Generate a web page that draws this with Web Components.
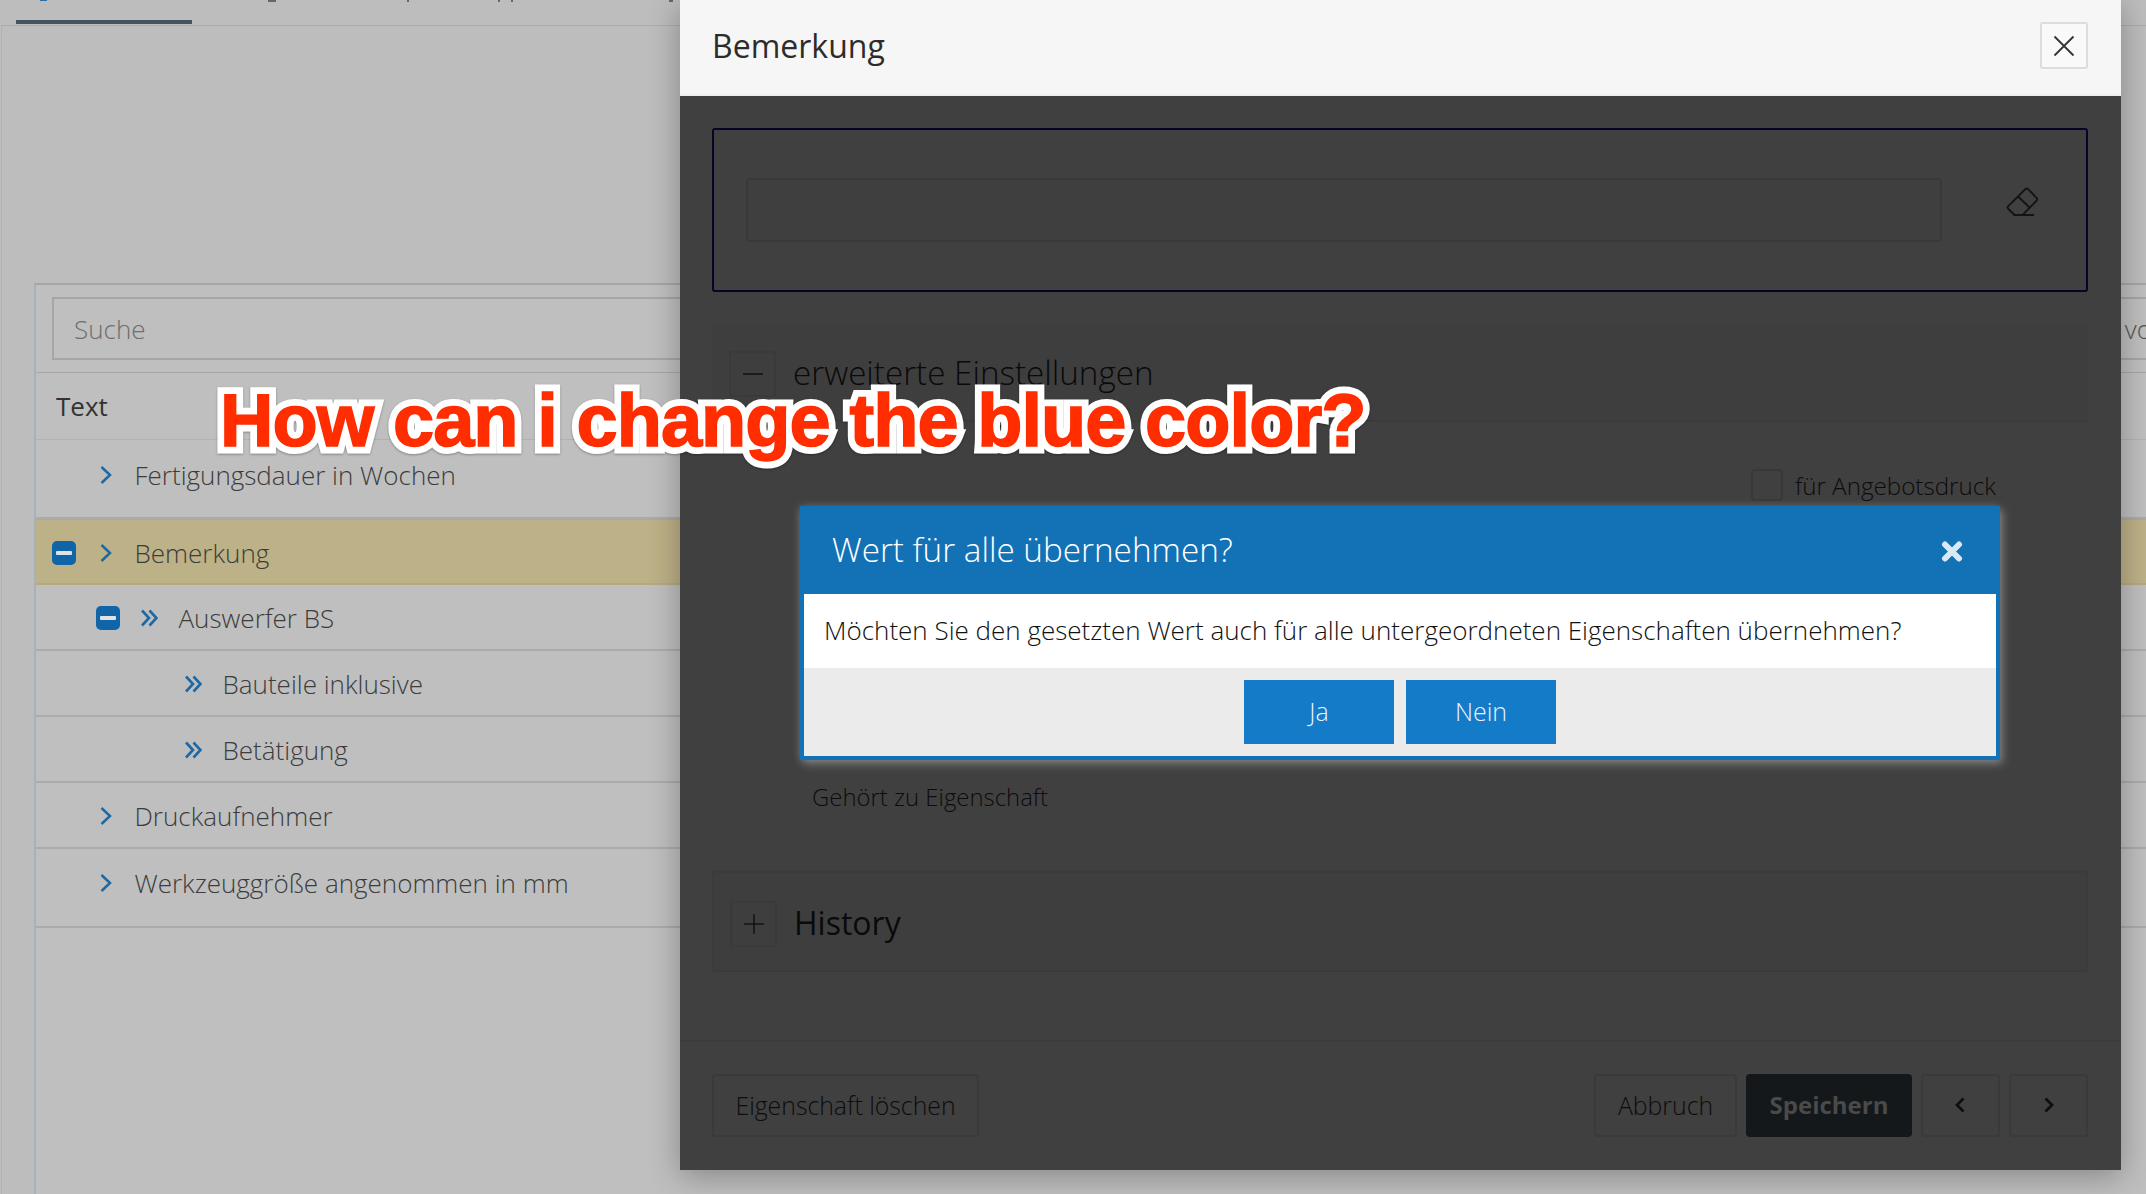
<!DOCTYPE html>
<html lang="de">
<head>
<meta charset="utf-8">
<title>Bemerkung</title>
<style>
html, body { margin: 0; height: 100%; }
</style>
</head>
<body>
<app-page>
  <tab-strip></tab-strip>
  <tree-card>
    <tree-row level="0" style="--extra:13px">Fertigungsdauer in Wochen</tree-row>
    <tree-row level="0" check active>Bemerkung</tree-row>
    <tree-row level="1" check double>Auswerfer BS</tree-row>
    <tree-row level="2" double>Bauteile inklusive</tree-row>
    <tree-row level="2" double>Betätigung</tree-row>
    <tree-row level="0">Druckaufnehmer</tree-row>
    <tree-row level="0" style="--extra:13px;--pad:12px">Werkzeuggröße angenommen in mm</tree-row>
  </tree-card>

  <edit-modal>
    <span slot="title">Bemerkung</span>
    <value-box></value-box>
    <modal-section mode="minus" style="margin-top:31px">erweiterte Einstellungen</modal-section>
    <check-line>für Angebotsdruck</check-line>
    <field-label>Gehört zu Eigenschaft</field-label>
    <modal-section mode="plus" outlined style="margin-top:56px">History</modal-section>
    <action-button slot="footer-left" width="267">Eigenschaft löschen</action-button>
    <action-button slot="footer-right" width="143">Abbruch</action-button>
    <action-button slot="footer-right" width="166" primary>Speichern</action-button>
    <action-button slot="footer-right" width="79" icon="prev"></action-button>
    <action-button slot="footer-right" width="79" icon="next"></action-button>
  </edit-modal>

  <confirm-dialog>
    <span slot="title">Wert für alle übernehmen?</span>
    Möchten Sie den gesetzten Wert auch für alle untergeordneten Eigenschaften übernehmen?
    <dialog-button slot="buttons">Ja</dialog-button>
    <dialog-button slot="buttons">Nein</dialog-button>
  </confirm-dialog>

  <note-label text="How can i change the blue color?">How can i change the blue color?</note-label>
</app-page>

<script>
customElements.define('app-page', class extends HTMLElement {
  constructor() {
    super();
    this.attachShadow({ mode: 'open' });
    this.shadowRoot.innerHTML = `
<style>
:host {
  display: block;
  position: relative;
  height: 1194px;
  overflow: hidden;
  background: #bdbdbd;
  font-family: "Open Sans", "Noto Sans", sans-serif;
  color: #3c3c3c;
}
</style>
<slot></slot>`;
  }
});

customElements.define('tab-strip', class extends HTMLElement {
  constructor() {
    super();
    this.attachShadow({ mode: 'open' });
    // the tab labels are cut off by the top edge, only their descenders show
    this.shadowRoot.innerHTML = `
<style>
:host {
  display: block;
  height: 25px;
  box-sizing: border-box;
  padding: 20px 0 0 16px;
  background:
    linear-gradient(#2f6ea3, #2f6ea3) 40px 0 / 7px 1px no-repeat,
    linear-gradient(#666, #666) 268px 0 / 8px 2px no-repeat,
    linear-gradient(#666, #666) 407px 0 / 2px 2px no-repeat,
    linear-gradient(#666, #666) 498px 0 / 2px 2px no-repeat,
    linear-gradient(#666, #666) 511px 0 / 2px 2px no-repeat,
    linear-gradient(#666, #666) 669px 0 / 4px 2px no-repeat;
}
.active { width: 176px; height: 4px; background: #46525d; }
</style>
<div class="active"></div>`;
  }
});

customElements.define('tree-card', class extends HTMLElement {
  constructor() {
    super();
    this.attachShadow({ mode: 'open' });
    this.shadowRoot.innerHTML = `
<style>
:host {
  display: block;
  margin-left: 1px;
  height: 1169px;
  box-sizing: border-box;
  border-top: 1px solid #ababab;
  border-left: 1px solid #aeb3b8;
  padding: 257px 0 0 32px;
  background: #bdbdbd;
}
.panel { border-left: 2px solid #a9b1b8; border-top: 2px solid #a6a6a6; height: 100%; background: #bfbfbf; }
.search { padding: 12px 0 12px 16px; border-bottom: 1px solid #a6a6a6; }
.input {
  height: 63px;
  box-sizing: border-box;
  display: flex;
  align-items: center;
  border: 2px solid #a6a6a6;
  border-right: 0;
  padding-left: 20px;
  font-size: 26px;
  font-weight: 300;
  color: #6e6e6e;
}
.input span { margin-left: auto; margin-right: -6px; color: #555; }
.head {
  height: 67px;
  box-sizing: border-box;
  display: flex;
  align-items: center;
  padding: 0 0 1px 20px;
  font-size: 26px;
  color: #333;
  border-bottom: 1px solid #a9b4bb;
}
</style>
<div class="panel">
  <div class="search"><div class="input">Suche<span>vo</span></div></div>
  <div class="head">Text</div>
  <slot></slot>
</div>`;
  }
});

customElements.define('tree-row', class extends HTMLElement {
  constructor() {
    super();
    this.attachShadow({ mode: 'open' });
    let level = Number(this.getAttribute('level') || 0);
    let chevron = this.hasAttribute('double')
      ? '<svg class="double" width="18" height="18" viewBox="0 0 18 18"><path d="M2 1.500 9 9 2 16.500M9.500 1.500 16.500 9 9.500 16.500" fill="none" stroke="#1d69a5" stroke-width="2.600"/></svg>'
      : '<svg width="12" height="18" viewBox="0 0 12 18"><path d="M1.500 1 10 9 1.500 17" fill="none" stroke="#1d69a5" stroke-width="2.500"/></svg>';
    let check = this.hasAttribute('check') ? '<i class="check"></i>' : '';
    this.shadowRoot.innerHTML = `
<style>
:host {
  display: flex;
  align-items: center;
  box-sizing: border-box;
  height: calc(66px + var(--extra, 0px));
  padding: 2px 0 var(--pad, calc(var(--extra, 3px) - 3px)) ${16 + level * 44}px;
  border-bottom: 2px solid #ababab;
  font-size: 26px;
  font-weight: 300;
  color: #3c3c3c;
}
:host([active]) { background: #bdb187; border-bottom-color: #b6a97e; border-top: 1px solid #b6a97e; }
.box { width: 24px; margin-right: 24px; display: flex; }
.check { width: 24px; height: 24px; border-radius: 5px; background: #1064a8; display: flex; align-items: center; justify-content: center; }
.check::after { content: ""; width: 16px; height: 4px; border-radius: 1px; background: #e2e2e2; }
.icon { width: 34.500px; display: flex; }
.double { margin-left: -4px; }
</style>
<div class="box">${check}</div>
<div class="icon">${chevron}</div>
<slot></slot>`;
  }
});

customElements.define('edit-modal', class extends HTMLElement {
  constructor() {
    super();
    this.attachShadow({ mode: 'open' });
    this.shadowRoot.innerHTML = `
<style>
:host {
  position: absolute;
  left: 680px;
  top: 0;
  width: 1441px;
  height: 1170px;
  display: flex;
  flex-direction: column;
  background: #404040;
  box-shadow: 0 6px 30px rgba(0,0,0,.3);
  color: #0c0c0c;
}
header {
  height: 96px;
  box-sizing: border-box;
  display: flex;
  align-items: center;
  justify-content: space-between;
  padding: 0 33px 4px 32px;
  background: #f6f6f6;
  border-bottom: 2px solid #eee;
  font-size: 32px;
  font-weight: 400;
  color: #2c2c2c;
}
.close {
  width: 48px;
  height: 47px;
  margin-top: 1px;
  box-sizing: border-box;
  border: 2px solid #dcdcdc;
  border-radius: 3px;
  background: #f9f9f9;
  display: flex;
  align-items: center;
  justify-content: center;
}
.body { flex: 1; padding: 32px 33px 0 32px; }
footer {
  height: 130px;
  box-sizing: border-box;
  border-top: 2px solid #3c3c3c;
  padding: 32px 33px 0 32px;
  display: flex;
  justify-content: space-between;
}
.right { display: flex; gap: 9px; }
</style>
<header>
  <slot name="title"></slot>
  <div class="close"><svg width="22" height="22" viewBox="0 0 22 22"><path d="M1.500 1.500 20.500 20.500M20.500 1.500 1.500 20.500" stroke="#333" stroke-width="1.800" fill="none"/></svg></div>
</header>
<div class="body"><slot></slot></div>
<footer>
  <div><slot name="footer-left"></slot></div>
  <div class="right"><slot name="footer-right"></slot></div>
</footer>`;
  }
});

customElements.define('value-box', class extends HTMLElement {
  constructor() {
    super();
    this.attachShadow({ mode: 'open' });
    this.shadowRoot.innerHTML = `
<style>
:host {
  display: flex;
  align-items: center;
  height: 164px;
  box-sizing: border-box;
  border: 2px solid #0a0328;
  border-radius: 3px;
  padding: 0 0 0 32px;
}
.field { flex: 1; height: 64px; box-sizing: border-box; border: 2px solid #393939; border-radius: 4px; background: #3f3f3f; }
svg { margin: -16px 42px 0 58px; display: block; }
</style>
<div class="field"></div>
<svg width="44" height="34" viewBox="0 0 44 34" fill="none" stroke="#141414" stroke-width="1.900">
  <path d="M14.500 30 8 23.500Q7 22.300 8 21.300L25.500 4Q26.700 3 28 4L36.700 13Q37.700 14.300 36.700 15.500L22.500 30"/>
  <path d="M13.500 30H34M18.300 11.700 29.300 22.300"/>
</svg>`;
  }
});

customElements.define('modal-section', class extends HTMLElement {
  constructor() {
    super();
    this.attachShadow({ mode: 'open' });
    let mark = this.getAttribute('mode') === 'plus' ? 'M2 10H22M12 0V20' : 'M2 10H22';
    this.shadowRoot.innerHTML = `
<style>
:host {
  display: flex;
  align-items: flex-start;
  box-sizing: border-box;
  height: 99px;
  padding: 28px 0 0 17px;
  background: #3e3e3e;
  border-bottom: 2px solid #3b3b3b;
  font-size: 33.200px;
  font-weight: 300;
  color: #0a0a0a;
  line-height: 43px;
}
:host([outlined]) { height: 102px; border: 2px solid #3b3b3b; border-top-width: 3px; padding-left: 16px; font-size: 32px; font-weight: 400; }
.mark {
  width: 47px;
  height: 46px;
  box-sizing: border-box;
  border: 2px solid #3a3a3a;
  border-radius: 3px;
  display: flex;
  align-items: center;
  justify-content: center;
  margin-right: 17px;
}
</style>
<div class="mark"><svg width="24" height="20" viewBox="0 0 24 20"><path d="${mark}" stroke="#141414" stroke-width="1.600" fill="none"/></svg></div>
<slot></slot>`;
  }
});

customElements.define('check-line', class extends HTMLElement {
  constructor() {
    super();
    this.attachShadow({ mode: 'open' });
    this.shadowRoot.innerHTML = `
<style>
:host {
  display: flex;
  justify-content: flex-end;
  align-items: center;
  gap: 12px;
  height: 32px;
  margin-top: 47px;
  padding-right: 92px;
  font-size: 24.200px;
  font-weight: 300;
  color: #0c0c0c;
}
i { width: 32px; height: 32px; box-sizing: border-box; border: 2px solid #383838; border-radius: 4px; }
</style>
<i></i><slot></slot>`;
  }
});

customElements.define('field-label', class extends HTMLElement {
  constructor() {
    super();
    this.attachShadow({ mode: 'open' });
    this.shadowRoot.innerHTML = `
<style>
:host {
  display: block;
  margin-top: 279px;
  padding-left: 100px;
  height: 34px;
  line-height: 34px;
  font-size: 23.900px;
  font-weight: 300;
  color: #0c0c0c;
}
</style>
<slot></slot>`;
  }
});

customElements.define('action-button', class extends HTMLElement {
  constructor() {
    super();
    this.attachShadow({ mode: 'open' });
    let glyph = '';
    if (this.getAttribute('icon') === 'prev') {
      glyph = '<svg width="12" height="16" viewBox="0 0 12 16"><path d="M8.500 1.500 2 8 8.500 14.500" fill="none" stroke="#0e0e0e" stroke-width="2.800"/></svg>';
    }
    if (this.getAttribute('icon') === 'next') {
      glyph = '<svg width="12" height="16" viewBox="0 0 12 16"><path d="M2.500 1.500 9 8 2.500 14.500" fill="none" stroke="#0e0e0e" stroke-width="2.800"/></svg>';
    }
    this.shadowRoot.innerHTML = `
<style>
:host {
  display: flex;
  align-items: center;
  justify-content: center;
  box-sizing: border-box;
  width: ${this.getAttribute('width')}px;
  height: 63px;
  padding-bottom: 2px;
  border: 2px solid #3a3a3a;
  border-radius: 4px;
  font-size: 24.800px;
  font-weight: 300;
  color: #0c0c0c;
}
:host([primary]) { background: #14181b; border-color: #14181b; color: #4a4a4a; font-size: 24px; font-weight: 700; }
</style>
${glyph}<slot></slot>`;
  }
});

customElements.define('confirm-dialog', class extends HTMLElement {
  constructor() {
    super();
    this.attachShadow({ mode: 'open' });
    this.shadowRoot.innerHTML = `
<style>
:host {
  position: absolute;
  left: 800px;
  top: 506px;
  width: 1200px;
  box-sizing: border-box;
  padding: 0 4px 4px;
  background: #1371b6;
  box-shadow: 3px 4px 9px rgba(255,255,255,.28), -1px 0 8px rgba(255,255,255,.16);
  font-weight: 300;
  color: #111;
}
header {
  height: 88px;
  box-sizing: border-box;
  display: flex;
  align-items: center;
  justify-content: space-between;
  padding: 0 33px 3px 28px;
  color: #fff;
  font-size: 33.250px;
}
header svg { margin-top: 5px; }
.text { height: 74px; box-sizing: border-box; display: flex; align-items: center; padding: 0 0 2px 20px; background: #fff; font-size: 26px; }
.actions { height: 88px; display: flex; align-items: center; justify-content: center; gap: 12px; background: #ebebeb; }
</style>
<header>
  <slot name="title"></slot>
  <svg width="22" height="21" viewBox="0 0 22 21"><path d="M4 3.500 18 17.500M18 3.500 4 17.500" stroke="#d9e9f6" stroke-width="6" stroke-linecap="round" fill="none"/></svg>
</header>
<div class="text"><slot></slot></div>
<div class="actions"><slot name="buttons"></slot></div>`;
  }
});

customElements.define('dialog-button', class extends HTMLElement {
  constructor() {
    super();
    this.attachShadow({ mode: 'open' });
    this.shadowRoot.innerHTML = `
<style>
:host {
  display: flex;
  align-items: center;
  justify-content: center;
  box-sizing: border-box;
  width: 150px;
  height: 64px;
  padding-bottom: 3px;
  background: #147bc9;
  color: #eaf3fa;
  font-size: 25px;
  font-weight: 300;
}
</style>
<slot></slot>`;
  }
});

customElements.define('note-label', class extends HTMLElement {
  constructor() {
    super();
    this.attachShadow({ mode: 'open' });
    this.shadowRoot.innerHTML = `
<style>
:host {
  position: absolute;
  left: 220px;
  top: 379px;
  white-space: nowrap;
  font-family: "Liberation Sans", Arial, sans-serif;
  font-size: 74px;
  font-weight: 700;
  letter-spacing: -0.950px;
  line-height: 84px;
  color: #ff2d00;
  -webkit-text-stroke: 15px #fff;
  paint-order: stroke fill;
  stroke-linejoin: round;
  filter: drop-shadow(0 1px 1px rgba(0,0,0,.3));
}
/* thickens the red letters above the white outline */
:host::after {
  content: attr(text);
  position: absolute;
  left: 0;
  top: 0;
  -webkit-text-stroke: 1.500px #ff2d00;
}
</style>
<slot></slot>`;
  }
});
</script>
</body>
</html>
